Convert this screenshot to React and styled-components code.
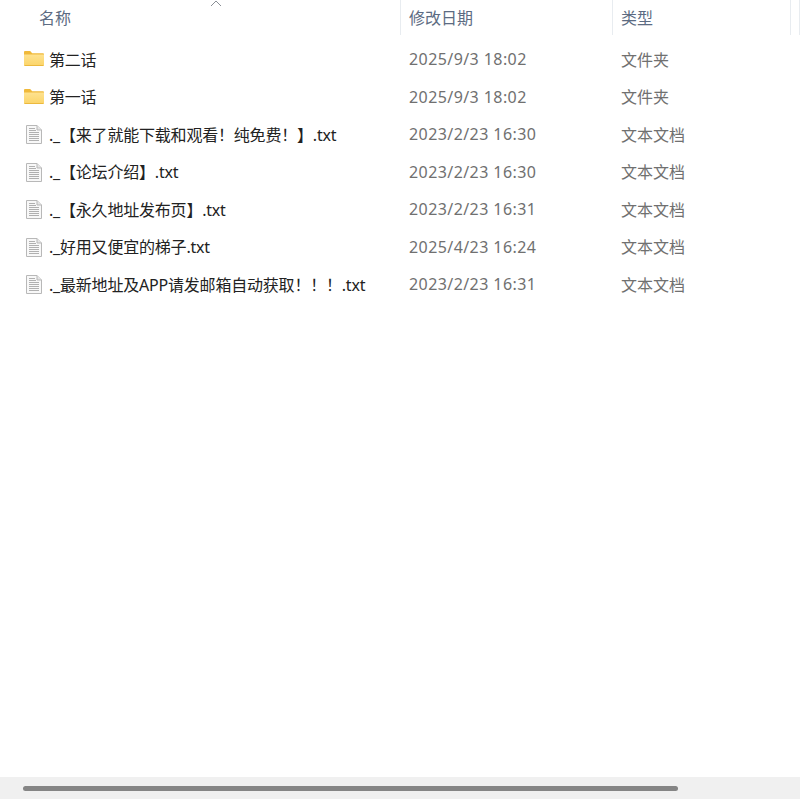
import styled, { createGlobalStyle } from "styled-components";

const COLUMNS = "401px 212px 178px 9px";

const files = [
  { name: "第二话", date: "2025/9/3 18:02", type: "文件夹", folder: true },
  { name: "第一话", date: "2025/9/3 18:02", type: "文件夹", folder: true },
  { name: "._【来了就能下载和观看！纯免费！】.txt", date: "2023/2/23 16:30", type: "文本文档" },
  { name: "._【论坛介绍】.txt", date: "2023/2/23 16:30", type: "文本文档" },
  { name: "._【永久地址发布页】.txt", date: "2023/2/23 16:31", type: "文本文档" },
  { name: "._好用又便宜的梯子.txt", date: "2025/4/23 16:24", type: "文本文档" },
  { name: "._最新地址及APP请发邮箱自动获取！！！.txt", date: "2023/2/23 16:31", type: "文本文档" },
];

const GlobalStyle = createGlobalStyle`
  html, body {
    margin: 0;
    padding: 0;
    background: #fff;
  }
  body {
    font-family: "Noto Sans", "Noto Sans CJK SC", sans-serif;
  }
`;

const Page = styled.div`
  width: 800px;
  height: 799px;
  display: flex;
  flex-direction: column;
  overflow: hidden;
`;

const Listing = styled.div`
  flex: 1;
`;

const Header = styled.div`
  display: grid;
  grid-template-columns: ${COLUMNS};
  height: 35px;
  margin-bottom: 5px;
`;

const HeaderCell = styled.div`
  position: relative;
  padding-left: ${({ $indent }) => $indent || 8}px;
  border-right: 1px solid #e8ecf0;
  color: #5c6b82;
  font-size: 16px;
  line-height: 36px;
  white-space: nowrap;
  overflow: hidden;
`;

const SortCaret = styled.svg`
  position: absolute;
  left: 210px;
  top: 0;
  width: 12px;
  height: 7px;
`;

const Row = styled.div`
  display: grid;
  grid-template-columns: ${COLUMNS};
  height: 37.5px;
  align-items: center;
  font-size: 16px;
`;

const NameCell = styled.div`
  display: flex;
  align-items: center;
  gap: 5px;
  padding-left: 23px;
  color: #222;
  letter-spacing: -0.2px;
  white-space: nowrap;
`;

const IconSlot = styled.span`
  display: flex;
  justify-content: center;
  flex: none;
  width: 21px;
`;

const DateCell = styled.div`
  padding: 1px 0 0 8px;
  color: #707070;
  letter-spacing: 0.42px;
  white-space: nowrap;
`;

const TypeCell = styled.div`
  padding-left: 8px;
  color: #707070;
  white-space: nowrap;
`;

const ScrollTrack = styled.div`
  height: 22px;
  background: #f0f0f0;
  padding: 9px 122px 0 23px;
  box-sizing: border-box;
`;

const ScrollThumb = styled.div`
  height: 5px;
  border-radius: 2.5px;
  background: #858585;
`;

const FileSvg = styled.svg`
  margin-top: 2px;
`;

const FolderIcon = ({ id }) => (
  <svg width="20" height="15" viewBox="0 0 20 15">
    <defs>
      <linearGradient id={id} x1="0" y1="0" x2="0" y2="1">
        <stop offset="0" stopColor="#fee28f" />
        <stop offset="1" stopColor="#fbd468" />
      </linearGradient>
    </defs>
    <path d="M0 1.2C0 .5.5 0 1.2 0h5l2 2.2h10.6c.7 0 1.2.5 1.2 1.2V4H0z" fill="#f0b93a" />
    <path d="M0 3.5h20v10.3c0 .7-.5 1.2-1.2 1.2H1.2C.5 15 0 14.5 0 13.8z" fill={`url(#${id})`} />
    <path d="M0 14h20v-.2c0 .7-.5 1.2-1.2 1.2H1.2C.5 15 0 14.5 0 13.8z" fill="#ecb93e" />
  </svg>
);

const FileIcon = () => (
  <FileSvg width="16" height="19" viewBox="0 0 16 19">
    <path d="M.5.5h10.5l4.5 4.5v13.5H.5z" fill="#f8f8f8" stroke="#b8b8b8" />
    <path d="M11 .5V5h4.5" fill="#e6e6e6" stroke="#b8b8b8" />
    <path
      d="M3 3.5h6M3 5.5h7M3 7.5h10M3 9.5h10M3 11.5h10M3 13.5h10M3 15.5h10"
      stroke="#b0b0b0"
    />
  </FileSvg>
);

export default function App() {
  return (
    <Page>
      <GlobalStyle />
      <Listing>
        <Header>
          <HeaderCell $indent={39}>
            名称
            <SortCaret viewBox="0 0 12 7">
              <path d="M1 6l5-5 5 5" fill="none" stroke="#8a8f96" strokeWidth="1" />
            </SortCaret>
          </HeaderCell>
          <HeaderCell>修改日期</HeaderCell>
          <HeaderCell>类型</HeaderCell>
          <HeaderCell>大小</HeaderCell>
        </Header>
        {files.map((file, index) => (
          <Row key={file.name}>
            <NameCell>
              <IconSlot>
                {file.folder ? <FolderIcon id={`folder-fill-${index}`} /> : <FileIcon />}
              </IconSlot>
              {file.name}
            </NameCell>
            <DateCell>{file.date}</DateCell>
            <TypeCell>{file.type}</TypeCell>
          </Row>
        ))}
      </Listing>
      <ScrollTrack>
        <ScrollThumb />
      </ScrollTrack>
    </Page>
  );
}
